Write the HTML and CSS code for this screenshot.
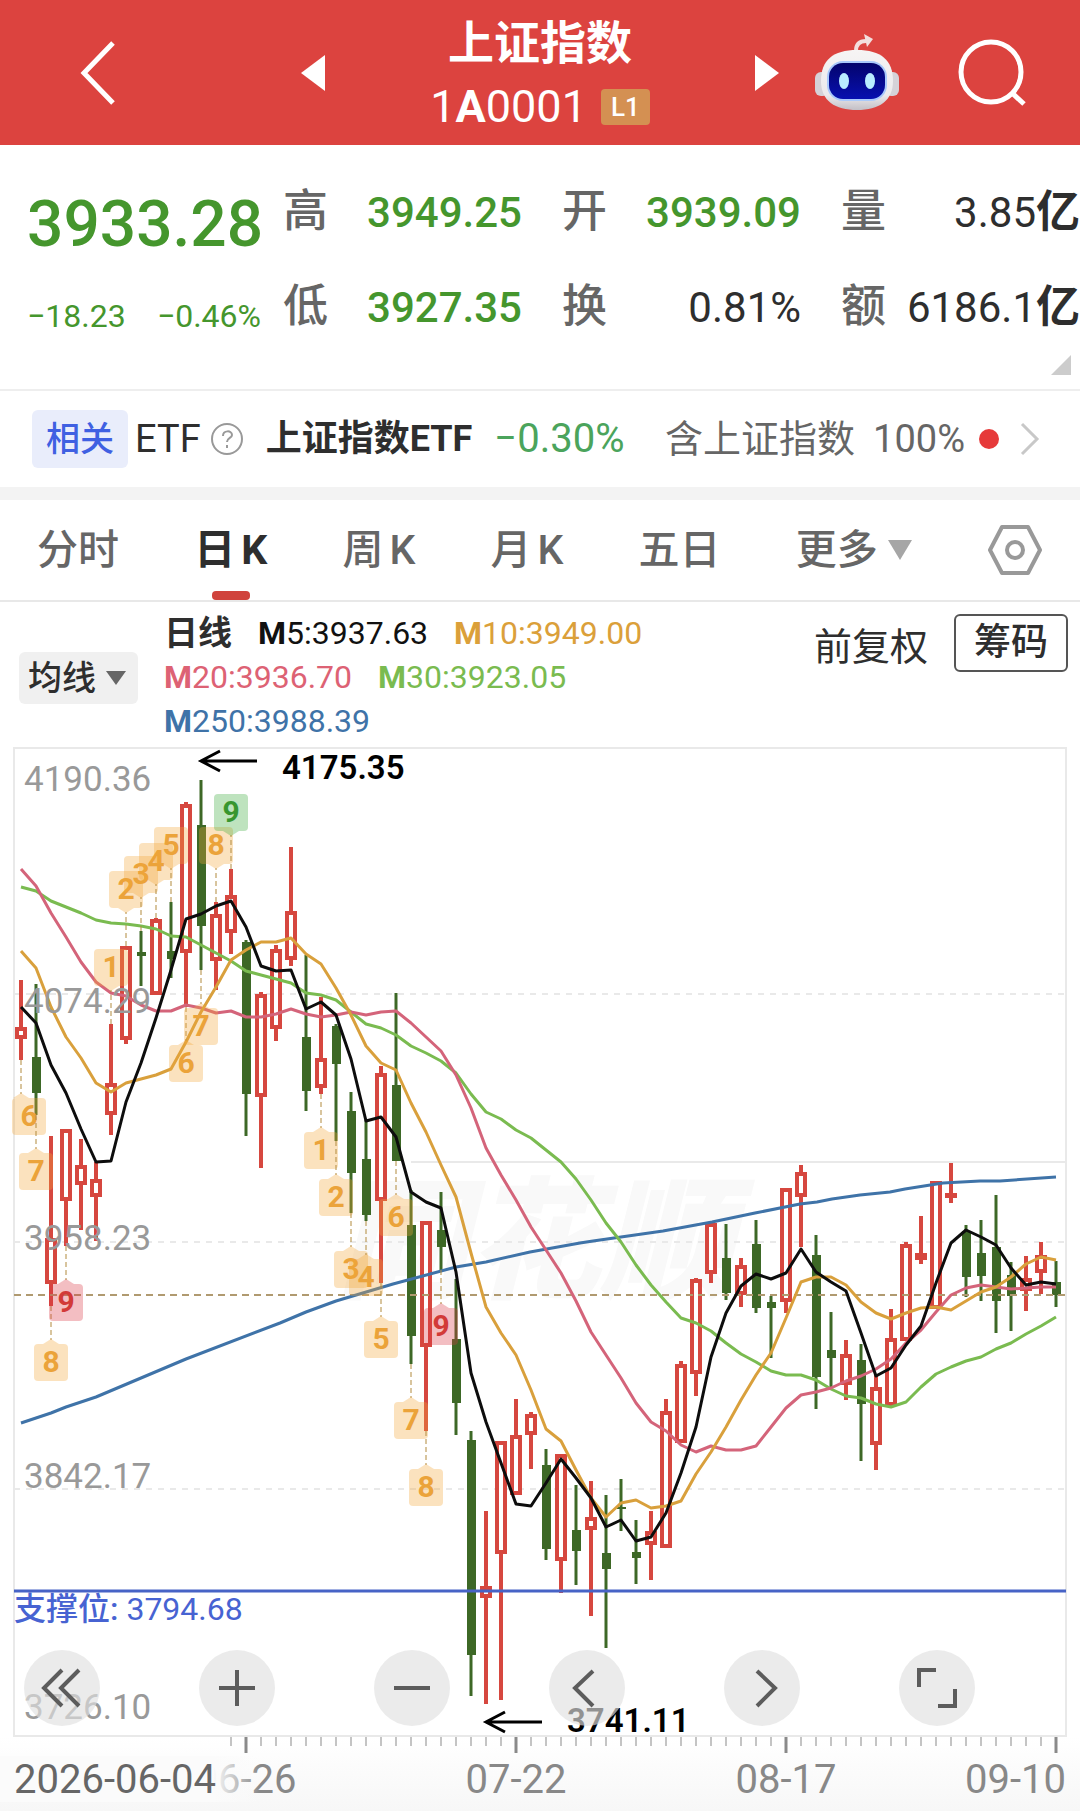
FILE: index.html
```html
<!DOCTYPE html>
<html lang="zh-CN">
<head>
<meta charset="utf-8">
<meta name="viewport" content="width=device-width, initial-scale=1">
<title>上证指数 1A0001</title>
<link rel="stylesheet" href="styles.css">
</head>
<body>
<header class="topbar">
  <div class="topbar-side topbar-left">
    <button class="icon-btn" aria-label="返回"><svg width="36" height="64" viewBox="0 0 36 64"><path d="M33 2 4 32l29 30" fill="none" stroke="#fff" stroke-width="5"/></svg></button>
    <button class="icon-btn" aria-label="上一个"><svg width="24" height="36" viewBox="0 0 24 36"><path d="M24 0v36L0 18z" fill="#fff"/></svg></button>
  </div>
  <div class="topbar-title">
    <h1>上证指数</h1>
    <p><span class="code">1<b>A</b>0001</span><span class="level">L1</span></p>
  </div>
  <div class="topbar-side topbar-right">
    <button class="icon-btn" aria-label="下一个"><svg width="24" height="36" viewBox="0 0 24 36"><path d="M0 0v36l24-18z" fill="#fff"/></svg></button>
    <button class="icon-btn robot" aria-label="智能助手"><svg width="84" height="78" viewBox="0 0 84 78">
      <defs>
        <linearGradient id="shell" x1="0" y1="0" x2="0" y2="1"><stop offset="0" stop-color="#f6f4f4"/><stop offset=".75" stop-color="#eceaec"/><stop offset="1" stop-color="#c3bfc6"/></linearGradient>
        <linearGradient id="visor" x1="0" y1="0" x2="0" y2="1"><stop offset="0" stop-color="#04046c"/><stop offset="1" stop-color="#0710b0"/></linearGradient>
      </defs>
      <rect x="0" y="38" width="14" height="24" rx="6" fill="#d5d2d8"/><rect x="70" y="38" width="14" height="24" rx="6" fill="#d5d2d8"/>
      <path d="M41 17c0-7 4-10 10-10" fill="none" stroke="#f3dedd" stroke-width="4"/><path d="M49 0l9 5-6 8z" fill="#f3dedd"/>
      <path d="M42 16c24 0 36 10 36 31 0 20-14 29-36 29S6 67 6 47c0-21 12-31 36-31z" fill="url(#shell)"/>
      <rect x="12" y="27" width="60" height="40" rx="16" fill="#a9c9fb"/>
      <rect x="14" y="29" width="56" height="36" rx="14" fill="url(#visor)"/>
      <ellipse cx="29" cy="47" rx="5" ry="8" fill="#b9edff"/><ellipse cx="55" cy="47" rx="5" ry="8" fill="#b9edff"/>
    </svg></button>
    <button class="icon-btn search" aria-label="搜索"><svg width="68" height="68" viewBox="0 0 68 68" fill="none" stroke="#fff" stroke-width="5"><circle cx="33" cy="33" r="30"/><path d="M54 54l12 11"/></svg></button>
  </div>
</header>

<section class="quote">
  <div class="price">
    <strong>3933.28</strong>
    <p><span>−18.23</span><span>−0.46%</span></p>
  </div>
  <dl class="stats">
    <div><dt>高</dt><dd class="down">3949.25</dd></div>
    <div><dt>开</dt><dd class="down">3939.09</dd></div>
    <div><dt>量</dt><dd>3.85<b>亿</b></dd></div>
    <div><dt>低</dt><dd class="down">3927.35</dd></div>
    <div><dt>换</dt><dd>0.81%</dd></div>
    <div><dt>额</dt><dd>6186.1<b>亿</b></dd></div>
  </dl>
  <svg class="corner" width="20" height="20" viewBox="0 0 20 20"><path d="M20 0v20H0z" fill="#ccc"/></svg>
</section>

<a class="related" href="#etf">
  <span class="tag">相关</span>
  <span class="etf">ETF</span>
  <svg class="help" width="34" height="34" viewBox="0 0 34 34" fill="none" stroke="#999" stroke-width="2"><circle cx="17" cy="17" r="15"/><path d="M13 14c0-6 9-6 9-1 0 3-5 3-5 7M17 23v3"/></svg>
  <b class="etf-name">上证指数ETF</b>
  <span class="etf-change">−0.30%</span>
  <span class="contains">含上证指数</span>
  <span class="share">100%</span>
  <i class="dot"></i>
  <svg class="more" width="20" height="34" viewBox="0 0 20 34"><path d="M2 2l15 15L2 32" fill="none" stroke="#c8c8c8" stroke-width="3"/></svg>
</a>

<nav class="tabs">
  <button>分时</button>
  <button class="active">日<span>K</span></button>
  <button>周<span>K</span></button>
  <button>月<span>K</span></button>
  <button>五日</button>
  <button class="tab-more">更多<svg width="24" height="20" viewBox="0 0 24 20"><path d="M0 0h24L12 20z" fill="#a6a6a6"/></svg></button>
  <button aria-label="设置"><svg width="56" height="52" viewBox="0 0 56 52" fill="none" stroke="#999" stroke-width="4" stroke-linejoin="round"><path d="M15 3h26l12 23-12 23H15L3 26z"/><circle cx="28" cy="26" r="8"/></svg></button>
</nav>

<section class="indicators">
  <button class="ma-btn">均线<svg width="20" height="14" viewBox="0 0 20 14"><path d="M0 0h20L10 14z" fill="#666"/></svg></button>
  <div class="legend">
    <p><b class="period">日线</b><span class="m5"><b>M</b>5:3937.63</span><span class="m10"><b>M</b>10:3949.00</span></p>
    <p><span class="m20"><b>M</b>20:3936.70</span><span class="m30"><b>M</b>30:3923.05</span></p>
    <p><span class="m250"><b>M</b>250:3988.39</span></p>
  </div>
  <button class="adjust">前复权</button>
  <button class="chips">筹码</button>
</section>

<main class="chart">
  <svg id="kline" class="kline" viewBox="0 746 1080 1065" role="img" aria-label="上证指数日K线图"></svg>
  <div class="tools">
    <button aria-label="最早"><svg viewBox="0 0 76 76"><path d="M38 20 20 38l18 18M55 20 37 38l18 18"/></svg></button>
    <button aria-label="放大"><svg viewBox="0 0 76 76"><path d="M38 20v36M20 38h36"/></svg></button>
    <button aria-label="缩小"><svg viewBox="0 0 76 76"><path d="M20 38h36"/></svg></button>
    <button aria-label="左移"><svg viewBox="0 0 76 76"><path d="M44 21 26 38l18 18"/></svg></button>
    <button aria-label="右移"><svg viewBox="0 0 76 76"><path d="M33 21l18 17-18 18"/></svg></button>
    <button aria-label="全屏"><svg viewBox="0 0 76 76"><path d="M20 37V20h17M56 39v17H39"/></svg></button>
  </div>
</main>
<script src="chart.js"></script>
</body>
</html>
```

FILE: styles.css
```css
* { box-sizing: border-box; }
body {
  margin: 0;
  background: #fff;
  color: #2e2e2e;
  font-family: Roboto, "Noto Sans CJK SC", sans-serif;
}
h1, p, dl, dd { margin: 0; }
button {
  padding: 0;
  border: 0;
  background: none;
  color: inherit;
  font: inherit;
}
svg { display: block; flex: none; }

.topbar {
  display: grid;
  grid-template-columns: 1fr 430px 1fr;
  align-items: center;
  height: 145px;
  background: #dc433f;
  color: #fff;
}
.topbar-side { display: flex; align-items: center; }
.topbar-left { justify-content: space-between; padding-left: 80px; }
.robot { margin-left: 36px; }
.search { margin-left: auto; margin-right: 54px; }
.topbar-title { padding-top: 8px; text-align: center; }
.topbar-title h1 { font-size: 46px; line-height: 60px; font-weight: 700; }
.topbar-title p {
  display: flex;
  justify-content: center;
  align-items: center;
  gap: 14px;
  height: 68px;
}
.code { font-size: 45px; }
.level {
  padding: 0 10px;
  border-radius: 4px;
  background: #d49052;
  font-size: 26px;
  line-height: 36px;
  font-weight: 500;
}

.quote {
  position: relative;
  display: flex;
  gap: 22px;
  padding: 19px 0 35px 27px;
  border-bottom: 2px solid #eee;
}
.price { width: 234px; color: #45962d; }
.price strong { display: block; font-size: 64px; line-height: 122px; font-weight: 500; }
.price p {
  display: flex;
  justify-content: space-between;
  font-size: 32px;
  line-height: 60px;
}
.stats {
  flex: 1;
  display: grid;
  grid-template-columns: repeat(3, 1fr);
  column-gap: 40px;
}
.stats div {
  display: flex;
  justify-content: space-between;
  align-items: baseline;
  height: 95px;
  line-height: 95px;
}
.stats dt { color: #666; font-size: 45px; font-weight: 500; }
.stats dd { font-size: 42px; white-space: nowrap; }
.stats b { font-size: 44px; line-height: 1; }
.stats .down { color: #45962d; font-weight: 500; }
.corner { position: absolute; right: 9px; bottom: 14px; }

.related {
  display: flex;
  align-items: center;
  height: 109px;
  padding: 0 40px 0 32px;
  border-bottom: 13px solid #f3f3f3;
  color: inherit;
  font-size: 38px;
  line-height: 56px;
  text-decoration: none;
  white-space: nowrap;
}
.tag {
  width: 96px;
  margin-right: 7px;
  border-radius: 6px;
  background: #e9edfb;
  color: #3f60e2;
  font-size: 34px;
  line-height: 58px;
  font-weight: 500;
  text-align: center;
}
.help { margin: 0 22px 0 9px; }
.etf-name { font-size: 36px; }
.etf-change { margin-left: 22px; color: #4ba45c; font-size: 40px; }
.contains { margin-left: auto; margin-right: 18px; color: #666; }
.share { color: #666; }
.dot { width: 20px; height: 20px; margin: 0 21px 0 14px; border-radius: 50%; background: #e63a3a; }

.tabs {
  display: flex;
  justify-content: space-between;
  height: 102px;
  padding: 0 37px;
  border-bottom: 2px solid #e8e8e8;
  color: #666;
  font-size: 41px;
  line-height: 56px;
  font-weight: 500;
}
.tabs button { position: relative; display: flex; align-items: center; gap: 6px; }
.tabs .tab-more { gap: 10px; }
.tabs .active { color: #2e2e2e; font-weight: 700; }
.tabs .active::after {
  content: "";
  position: absolute;
  bottom: 0;
  left: 50%;
  width: 38px;
  height: 9px;
  margin-left: -19px;
  border-radius: 4px;
  background: #d0433c;
}

.indicators {
  display: flex;
  align-items: flex-start;
  height: 144px;
  padding: 9px 12px 0 19px;
  font-size: 34px;
}
.ma-btn {
  display: flex;
  align-items: center;
  gap: 10px;
  height: 52px;
  margin-top: 41px;
  margin-right: 26px;
  padding: 0 12px 0 9px;
  border-radius: 6px;
  background: #f0f0f0;
  line-height: 48px;
  font-weight: 500;
}
.legend { flex: 1; font-size: 32px; line-height: 44px; white-space: nowrap; }
.legend p { display: flex; gap: 26px; height: 44px; }
.period { font-size: 34px; }
.m5 { color: #111; }
.m10 { color: #dba03a; }
.m20 { color: #dd6274; }
.m30 { color: #7abb50; }
.m250 { color: #3f73a8; }
.adjust { margin: 8px 26px 0 0; font-size: 38px; line-height: 56px; }
.chips {
  width: 114px;
  margin-top: 3px;
  border: 2px solid #555;
  border-radius: 6px;
  font-size: 37px;
  line-height: 54px;
  font-weight: 500;
}

.chart { position: relative; background: linear-gradient(#fff 93%, #f7f7f7); }
.kline { width: 100%; height: auto; font-family: Roboto, "Noto Sans CJK SC", sans-serif; }
.grid { fill: none; stroke: #e9e9e9; stroke-width: 2; }
.dashed { stroke-dasharray: 6 6; }
.last { stroke: #b09a70; stroke-dasharray: 7 5; }
.mark { fill: #f9f9f9; font-size: 132px; font-weight: 900; font-style: italic; }
.up { fill: #fff; stroke: #d6473f; stroke-width: 4; }
.dn { fill: #3d6826; stroke: none; }
.wick-up { stroke: #d6473f; stroke-width: 4; }
.wick-dn { stroke: #3d6826; stroke-width: 3; }
.line { fill: none; stroke-width: 3; stroke-linejoin: round; }
.flag { fill: #f3a73b; fill-opacity: .33; }
.flag-text { fill: #eba33a; font-size: 30px; font-weight: 700; text-anchor: middle; }
.flag.sell { fill: #3aaa3a; }
.flag-text.sell { fill: #38962f; }
.flag.buy { fill: #dc3a45; }
.flag-text.buy { fill: #d23a38; }
.leader { stroke: #b18a3c; stroke-width: 1; stroke-dasharray: 5 3; }
.scale { fill: #999; font-size: 35px; }
.peak { fill: #000; font-size: 33px; font-weight: 600; }
.arrow { fill: none; stroke: #000; stroke-width: 3; }
.support { stroke: #4763c6; stroke-width: 3; }
.support-text { fill: #4763d2; font-size: 32px; }
.tick { stroke: #c4c4c4; stroke-width: 2; }
.tick-major { stroke: #8a8a8a; stroke-width: 3; }
.date { fill: #888; font-size: 40px; }
.date-start { fill: #666; font-size: 40px; }

.tools {
  position: absolute;
  left: 24px;
  right: 105px;
  bottom: 8%;
  display: flex;
  justify-content: space-between;
}
.tools button { border-radius: 50%; background: rgba(224, 224, 224, .65); }
.tools svg { width: 76px; height: 76px; fill: none; stroke: #5c5c5c; stroke-width: 4; }
```

FILE: chart.js
```js
// Each candle: direction (1 up, 0 down), high, body top, body bottom, low.
const candles = [
[1,980,1027,1039,1060],[0,984,1057,1093,1115],[1,1136,1238,1284,1306],[1,1129,1129,1201,1246],[1,1139,1165,1185,1230],
[1,1162,1179,1197,1241],[1,1024,1083,1115,1135],[1,946,946,1040,1044],[0,931,952,956,986],[1,918,919,995,995],
[0,902,951,959,978],[1,802,804,953,1007],[0,780,825,926,970],[1,902,914,961,990],[1,869,895,933,954],
[0,940,942,1094,1136],[1,992,994,1097,1168],[1,945,949,1029,1041],[1,847,911,960,966],[0,955,1037,1091,1111],
[1,997,1058,1088,1094],[0,1024,1026,1064,1141],[0,1092,1111,1173,1213],[0,1120,1159,1215,1221],[1,1066,1073,1201,1283],
[0,993,1085,1161,1161],[0,1190,1225,1336,1364],[1,1221,1221,1347,1431],[0,1192,1230,1247,1270],[0,1279,1339,1403,1435],
[0,1431,1440,1655,1696],[1,1511,1586,1598,1704],[1,1441,1441,1554,1700],[1,1399,1435,1495,1495],[1,1412,1414,1435,1469],
[0,1449,1465,1549,1560],[1,1454,1454,1561,1593],[0,1485,1530,1551,1585],[1,1481,1517,1530,1616],[0,1495,1553,1569,1648],
[0,1479,1507,1509,1531],[0,1520,1552,1558,1584],[1,1511,1531,1545,1580],[1,1399,1411,1548,1548],[1,1361,1364,1443,1443],
[1,1278,1279,1374,1396],[1,1222,1223,1274,1283],[0,1224,1258,1293,1300],[1,1258,1265,1295,1307],[0,1220,1244,1308,1313],
[0,1296,1302,1308,1358],[1,1188,1188,1302,1313],[1,1165,1172,1197,1247],[0,1235,1255,1377,1409],[0,1312,1350,1358,1388],
[1,1340,1354,1385,1400],[0,1344,1360,1404,1461],[1,1375,1387,1445,1470],[1,1309,1338,1406,1406],[1,1242,1244,1341,1341],
[1,1216,1253,1260,1264],[1,1181,1181,1309,1309],[1,1163,1193,1196,1203],[0,1225,1231,1277,1297],[0,1220,1253,1276,1301],
[0,1195,1247,1301,1333],[0,1262,1275,1296,1331],[1,1256,1278,1291,1311],[1,1242,1255,1273,1294],[0,1261,1282,1295,1307]];

// One value per candle, except the smooth 250-day average, kept as x,y points.
const averages = {
'#3f73a8': '21,1423 36,1418 51,1413 66,1407 96,1397 186,1359 280,1323 306,1312 336,1301 393,1284 456,1267 486,1262 530,1252 580,1243 593,1241 663,1231 712,1222 755,1213 800,1204 817,1202 832,1199 860,1195 890,1192 905,1189 943,1183 980,1181 1000,1181 1056,1177',
'#7abb50': [887,891,901,907,913,920,923,924,926,929,936,937,945,953,961,971,975,979,983,993,995,1000,1012,1024,1028,1035,1046,1053,1061,1073,1094,1112,1119,1130,1138,1150,1162,1179,1200,1223,1242,1265,1285,1302,1318,1323,1331,1343,1354,1362,1371,1375,1375,1380,1389,1396,1398,1404,1407,1402,1387,1374,1367,1361,1357,1349,1343,1334,1326,1317],
'#d4647a': [869,886,913,937,962,982,993,996,1005,1011,1011,1005,1008,1013,1011,1017,1017,1014,1009,1014,1017,1015,1012,1015,1012,1011,1023,1037,1051,1075,1108,1148,1175,1200,1227,1250,1273,1301,1332,1355,1378,1403,1422,1431,1445,1452,1446,1450,1450,1446,1427,1408,1395,1392,1388,1381,1376,1369,1359,1343,1330,1312,1295,1288,1285,1287,1289,1288,1287,1287],
'#d9a03c': [951,968,1007,1037,1058,1083,1092,1083,1079,1075,1069,1042,1012,987,960,950,942,942,938,954,964,988,1015,1046,1063,1070,1103,1132,1165,1197,1253,1307,1333,1355,1390,1429,1441,1470,1498,1517,1503,1500,1508,1506,1501,1474,1452,1427,1400,1375,1353,1318,1282,1277,1277,1285,1302,1313,1319,1313,1308,1307,1310,1301,1292,1287,1277,1264,1257,1260],
'#0d0d0d': [1007,1023,1065,1093,1129,1162,1161,1102,1063,1018,970,919,914,906,901,927,966,971,970,1009,1002,1015,1059,1121,1117,1137,1192,1202,1208,1272,1373,1422,1463,1504,1506,1483,1459,1478,1498,1527,1520,1541,1537,1513,1473,1427,1357,1313,1286,1274,1279,1273,1249,1272,1282,1291,1333,1376,1368,1345,1326,1283,1243,1230,1237,1245,1268,1285,1282,1284]
};

// Sequence markers: candle index, number, side (-1 above, 1 below), kind.
const markers = [
[0,6,1],[1,7,1],[2,8,1],[3,9,1,'buy'],[6,1,-1],[7,2,-1],[8,3,-1],[9,4,-1],[10,5,-1],[11,6,1],[12,7,1],[13,8,-1],[14,9,-1,'sell'],
[20,1,1],[21,2,1],[22,3,1],[23,4,1],[24,5,1],[25,6,1],[26,7,1],[27,8,1],[28,9,1,'buy']];

const xOf = i => 21 + 15 * i;
const hline = (cls, x1, x2, y) => `<path class="${cls}" d="M${x1} ${y}H${x2}"/>`;
const text = (cls, x, y, s, anchor = 'start') => `<text class="${cls}" x="${x}" y="${y}" text-anchor="${anchor}">${s}</text>`;
let out = text('mark', 336, 1288, '同花顺');

out += '<rect class="grid" x="14" y="748" width="1052" height="988"/>';
for (const y of [994, 1242, 1489]) out += hline('grid dashed', 14, 1066, y);
out += hline('grid', 411, 1066, 1162);

candles.forEach(([up, high, top, bottom, low], i) => {
  const x = xOf(i);
  out += `<path class="wick-${up ? 'up' : 'dn'}" d="M${x} ${high}V${low}"/>`;
  out += up
    ? `<rect class="up" x="${x - 4}" y="${top + 2}" width="8" height="${Math.max(bottom - top - 4, 1)}"/>`
    : `<rect class="dn" x="${x - 4}" y="${top}" width="9" height="${bottom - top}"/>`;
});
out += hline('grid last', 14, 1066, 1295);

for (const [color, values] of Object.entries(averages)) {
  const points = typeof values === 'string' ? values : values.map((y, i) => `${xOf(i)},${y}`).join(' ');
  out += `<polyline class="line" stroke="${color}" points="${points}"/>`;
}

for (const [i, n, side, kind = ''] of markers) {
  const x = xOf(i), cx = Math.max(x, 29);
  const edge = side > 0 ? candles[i][4] : candles[i][1];
  const near = edge + side * 38, boxTop = side > 0 ? near : near - 37;
  out += `<path class="leader" d="M${x} ${edge}V${near - side * 4}"/>`;
  out += `<path class="flag ${kind}" d="M${x - 8} ${near}L${x} ${near - side * 5}L${x + 8} ${near}z"/>`;
  out += `<rect class="flag ${kind}" x="${cx - 17}" y="${boxTop}" width="34" height="37" rx="4"/>`;
  out += `<text class="flag-text ${kind}" x="${cx}" y="${boxTop + 28}">${n}</text>`;
}

[['4190.36', 791], ['4074.29', 1013], ['3958.23', 1250], ['3842.17', 1488], ['3726.10', 1719]]
  .forEach(([s, y]) => { out += text('scale', 24, y, s); });

out += '<path class="arrow" d="M257 761H201M220 751L201 761l19 10M542 1722H486M505 1712l-19 10 19 10"/>';
out += text('peak', 282, 779, '4175.35') + text('peak', 567, 1732, '3741.11');
out += hline('support', 14, 1066, 1591);
out += text('support-text', 14, 1620, '<tspan font-weight="500">支撑位:</tspan> 3794.68');

for (let i = 14; i < 70; i++) {
  const major = (i - 15) % 18 === 0;
  out += `<path class="${major ? 'tick-major' : 'tick'}" d="M${xOf(i)} 1737V${major ? 1753 : 1746}"/>`;
}
out += text('date', 246, 1793, '06-26', 'middle') + text('date', 516, 1793, '07-22', 'middle');
out += text('date', 786, 1793, '08-17', 'middle') + text('date', 1066, 1793, '09-10', 'end');
out += '<defs><linearGradient id="fade"><stop offset=".82" stop-color="#fbfbfb"/><stop offset="1" stop-color="#fbfbfb" stop-opacity="0"/></linearGradient></defs>';
out += '<rect x="0" y="1756" width="260" height="46" fill="url(#fade)"/>';
out += text('date-start', 14, 1793, '2026-06-04');
document.getElementById('kline').innerHTML = out;
```
